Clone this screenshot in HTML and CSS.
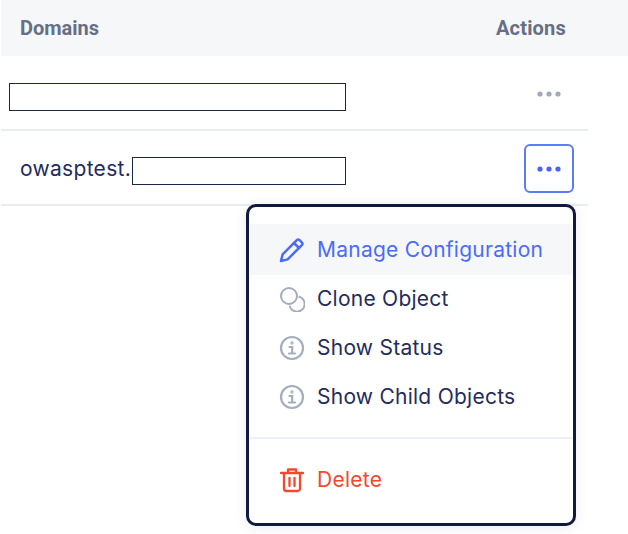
FILE: index.html
```html
<!DOCTYPE html>
<html lang="en">
<head>
<meta charset="utf-8">
<title>Domains</title>
<link rel="stylesheet" href="styles.css">
</head>
<body>
<div class="page">
  <div class="head">
    <span>Domains</span>
    <span class="head-actions">Actions</span>
  </div>
  <div class="rows">
    <div class="row">
      <span class="mask mask-full"></span>
      <button class="more" aria-label="More">
        <svg width="26" height="6" viewBox="0 0 26 6"><circle cx="4" cy="3" r="2.6"/><circle cx="13" cy="3" r="2.6"/><circle cx="22" cy="3" r="2.6"/></svg>
      </button>
    </div>
    <div class="row">
      <span class="domain">owasptest.</span><span class="mask mask-part"></span>
      <button class="more more-active" aria-label="More">
        <svg width="26" height="6" viewBox="0 0 26 6"><circle cx="4" cy="3" r="2.6"/><circle cx="13" cy="3" r="2.6"/><circle cx="22" cy="3" r="2.6"/></svg>
      </button>
    </div>
  </div>
  <div class="menu">
    <div class="item item-hover">
      <svg class="icon" viewBox="0 0 26 26" fill="none" stroke="#4a6cf7" stroke-width="2.5" stroke-linejoin="round" stroke-linecap="round"><path d="M2 24l1.6-6.6L17.8 3.2a2 2 0 0 1 2.8 0l2.200 2.200a2 2 0 0 1 0 2.800L8.600 22.400z"/><path d="M15 6l5 5"/></svg>
      <span>Manage Configuration</span>
    </div>
    <div class="item">
      <svg class="icon" viewBox="0 0 26 26" fill="none" stroke="#a3adc0" stroke-width="2"><circle cx="10" cy="10" r="8"/><path d="M19.600 10.600a7.600 7.600 0 1 1-9 9"/></svg>
      <span>Clone Object</span>
    </div>
    <div class="item">
      <svg class="icon" viewBox="0 0 26 26" fill="none" stroke="#a3adc0" stroke-width="2.2" stroke-linecap="round"><circle cx="13" cy="13" r="11"/><path d="M10.500 12h2.700v6M10 18.500h6"/><circle cx="13" cy="8" r=".6"/></svg>
      <span>Show Status</span>
    </div>
    <div class="item">
      <svg class="icon" viewBox="0 0 26 26" fill="none" stroke="#a3adc0" stroke-width="2.2" stroke-linecap="round"><circle cx="13" cy="13" r="11"/><path d="M10.500 12h2.700v6M10 18.500h6"/><circle cx="13" cy="8" r=".6"/></svg>
      <span>Show Child Objects</span>
    </div>
    <div class="divider"></div>
    <div class="item item-danger">
      <svg class="icon" viewBox="0 0 26 26" fill="none" stroke="#f4472e" stroke-width="2.3" stroke-linecap="round" stroke-linejoin="round"><path d="M2 6h22M9 6V2.500h8V6M5 6v15.500a2.500 2.500 0 0 0 2.500 2.500h11a2.500 2.500 0 0 0 2.500-2.500V6M10.500 11v8M15.500 11v8"/></svg>
      <span>Delete</span>
    </div>
  </div>
</div>
</body>
</html>
```
FILE: styles.css
```css
* { box-sizing: border-box; }
html, body { margin: 0; padding: 0; background: #fff; }
body { font-family: Inter, "Liberation Sans", sans-serif; }
.page { position: relative; width: 628px; height: 534px; overflow: hidden; }
.head {
  display: flex; justify-content: space-between; align-items: center;
  height: 56px; margin-left: 1px; padding: 0 62px 0 19px;
  background: #f6f7f9; color: #666f85;
  font-family: Roboto, Inter, sans-serif; font-weight: 700; font-size: 20px;
}
.head-actions { letter-spacing: .2px; }
.rows { width: 588px; }
.row {
  display: flex; align-items: center; position: relative;
  height: 75px; margin-left: 1px; border-bottom: 2px solid #e9ecf3;
  padding-left: 19px; padding-right: 14px;
}
.domain { color: #232c5c; font-size: 21px; letter-spacing: .3px; margin-top: 2px; }
.mask { display: block; height: 28px; background: #fff; border: 1px solid #1a2744; }
.mask-full { width: 337px; margin-left: -11px; margin-top: 8px; }
.mask-part { width: 214px; margin-left: 1px; margin-top: 6px; }
.more {
  display: flex; align-items: center; justify-content: center;
  width: 50px; height: 49px; margin-left: auto; margin-top: 2px; padding: 0;
  background: #fff; border: 2px solid transparent; border-radius: 6px;
}
.more svg { fill: #a1a9bb; }
.more-active { border-color: #5b7bf9; }
.more-active svg { fill: #4a62f5; }
.menu {
  position: absolute; left: 246px; top: 204px; width: 330px; height: 322px;
  padding: 17px 1px 0; background: #fff;
  border: 3px solid #12193f; border-radius: 10px;
  box-shadow: 0 2px 14px rgba(20, 30, 70, .08);
  color: #232c5c; font-size: 21px; letter-spacing: .25px;
}
.item { display: flex; align-items: center; gap: 12.5px; height: 49px; padding-left: 28.5px; }
.icon { width: 26px; height: 26px; flex: none; }
.item-hover { height: 51px; margin-bottom: -1px; background: #f6f7f9; color: #4a6cf7; }
.divider { height: 2px; margin-top: 16px; margin-bottom: 16px; background: #edf0f7; }
.item-danger { color: #f4472e; }
```
